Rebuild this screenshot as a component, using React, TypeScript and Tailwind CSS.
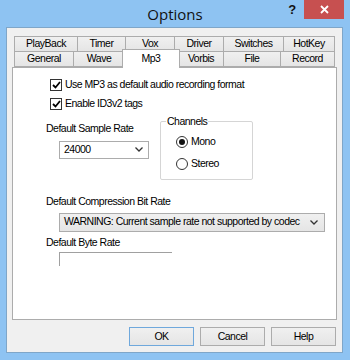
import React from "react";

const row1 = [
  { label: "PlayBack", w: 63 },
  { label: "Timer", w: 48 },
  { label: "Vox", w: 49 },
  { label: "Driver", w: 49 },
  { label: "Switches", w: 60 },
  { label: "HotKey", w: 52 },
];

const row2 = [
  { label: "General", w: 59 },
  { label: "Wave", w: 51 },
  { label: "Mp3", w: 54, active: true },
  { label: "Vorbis", w: 45 },
  { label: "File", w: 57 },
  { label: "Record", w: 55 },
];

function Tab({ label, w, active }: { label: string; w: number; active?: boolean }) {
  if (active) {
    return (
      <div
        style={{ width: w + 4 }}
        className="-mx-[2px] -mt-[2px] h-[19px] -mb-px z-10 relative bg-white border border-b-0 border-[#acacac] flex justify-center pt-[1px]"
      >
        {label}
      </div>
    );
  }
  return (
    <div
      style={{ width: w }}
      className="h-[16px] border border-r-0 last:border-r border-[#acacac] bg-gradient-to-b from-[#f0f0f0] to-[#e5e5e5] flex items-center justify-center"
    >
      {label}
    </div>
  );
}

function Chevron() {
  return (
    <svg width="8" height="5" viewBox="0 0 8 5" className="shrink-0">
      <path d="M0.5 0.5 L4 4 L7.5 0.5" fill="none" stroke="#333" strokeWidth="1.3" />
    </svg>
  );
}

function Checkbox({ label }: { label: string }) {
  return (
    <div className="flex items-center h-[13px]">
      <div className="w-[12px] h-[12px] border border-[#333] bg-white flex items-center justify-center">
        <svg width="9" height="8" viewBox="0 0 9 8">
          <path d="M1 4 L3.5 6.5 L8 1" fill="none" stroke="#000" strokeWidth="1.8" />
        </svg>
      </div>
      <span className="ml-[3px]">{label}</span>
    </div>
  );
}

function Radio({ label, checked }: { label: string; checked?: boolean }) {
  return (
    <div className="flex items-center h-[13px]">
      <div className="w-[12px] h-[12px] rounded-full border border-[#333] bg-white flex items-center justify-center">
        {checked && <div className="w-[6px] h-[6px] rounded-full bg-[#111]" />}
      </div>
      <span className="ml-[3px]">{label}</span>
    </div>
  );
}

function Button({ label, isDefault }: { label: string; isDefault?: boolean }) {
  return (
    <div
      className={`w-[65px] h-[19px] flex items-center justify-center border bg-gradient-to-b from-[#f0f0f0] to-[#e5e5e5] ${
        isDefault ? "border-[#6fa8dc]" : "border-[#acacac]"
      }`}
    >
      {label}
    </div>
  );
}

export default function App() {
  return (
    <div
      className="w-[350px] h-[360px] bg-[#8ec3f2] flex flex-col text-[10.5px] tracking-[-0.5px] text-black"
      style={{ fontFamily: '"Liberation Sans", Arial, sans-serif' }}
    >
      {/* Title bar */}
      <div className="h-[27px] flex items-start relative">
        <div
          className="flex-1 text-center text-[15px] tracking-normal text-[#111] pt-[3px]"
          style={{ fontFamily: '"Open Sans", "Noto Sans", sans-serif' }}
        >
          Options
        </div>
        <div className="absolute right-[6px] top-0 flex items-start">
          <div className="w-[24px] h-[19px] flex items-center justify-center font-bold text-[13px] text-[#111]">
            ?
          </div>
          <div className="w-[40px] h-[19px] bg-[#c75050] flex items-center justify-center">
            <svg width="9" height="9" viewBox="0 0 9 9">
              <path d="M1 1 L8 8 M8 1 L1 8" stroke="#fff" strokeWidth="1.8" />
            </svg>
          </div>
        </div>
      </div>

      {/* Client */}
      <div className="ml-[6px] w-[337px] h-[326px] bg-[#f0f0f0] border border-[#7fa6c8] flex flex-col pt-[8px] px-[5px]">
        {/* Tabs */}
        <div className="ml-[2px] flex">
          {row1.map((t) => (
            <Tab key={t.label} {...t} />
          ))}
        </div>
        <div className="ml-[2px] flex items-end -mt-px">
          {row2.map((t) => (
            <Tab key={t.label} {...t} />
          ))}
        </div>

        {/* Page */}
        <div className="w-[325px] h-[253px] bg-white border border-[#acacac] flex flex-col pl-[33px] pt-[10px]">
          <div className="pl-[4px] flex flex-col gap-[6px]">
            <Checkbox label="Use MP3 as default audio recording format" />
            <Checkbox label="Enable ID3v2 tags" />
          </div>

          <div className="flex mt-[3px]">
            <div className="w-[114px] pt-[8px]">
              <div>Default Sample Rate</div>
              <div className="ml-[13px] mt-[4px] w-[90px] h-[18px] border border-[#acacac] bg-white flex items-center justify-between pl-[4px] pr-[5px]">
                <span>24000</span>
                <Chevron />
              </div>
            </div>
            <div className="relative w-[93px] h-[59px] border border-[#d5d5d5] rounded-[2px] mt-[8px] pl-[15px] pt-[13px] flex flex-col gap-[9px]">
              <div className="absolute -top-[8px] left-[5px] bg-white px-px">Channels</div>
              <Radio label="Mono" checked />
              <Radio label="Stereo" />
            </div>
          </div>

          <div className="mt-[14px]">Default Compression Bit Rate</div>
          <div className="ml-[13px] mt-[3px] w-[266px] h-[19px] border border-[#acacac] bg-gradient-to-b from-[#f0f0f0] to-[#e5e5e5] flex items-center justify-between pl-[4px] pr-[6px]">
            <span>WARNING: Current sample rate not supported by codec</span>
            <Chevron />
          </div>

          <div className="mt-[3px]">Default Byte Rate</div>
          <div className="ml-[13px] mt-[1px] w-[113px] h-[14px] border-t border-l border-[#a0a0a0]" />
        </div>

        {/* Buttons */}
        <div className="flex justify-end gap-[6px] mt-[7px] pr-[1px]">
          <Button label="OK" isDefault />
          <Button label="Cancel" />
          <Button label="Help" />
        </div>
      </div>
    </div>
  );
}
